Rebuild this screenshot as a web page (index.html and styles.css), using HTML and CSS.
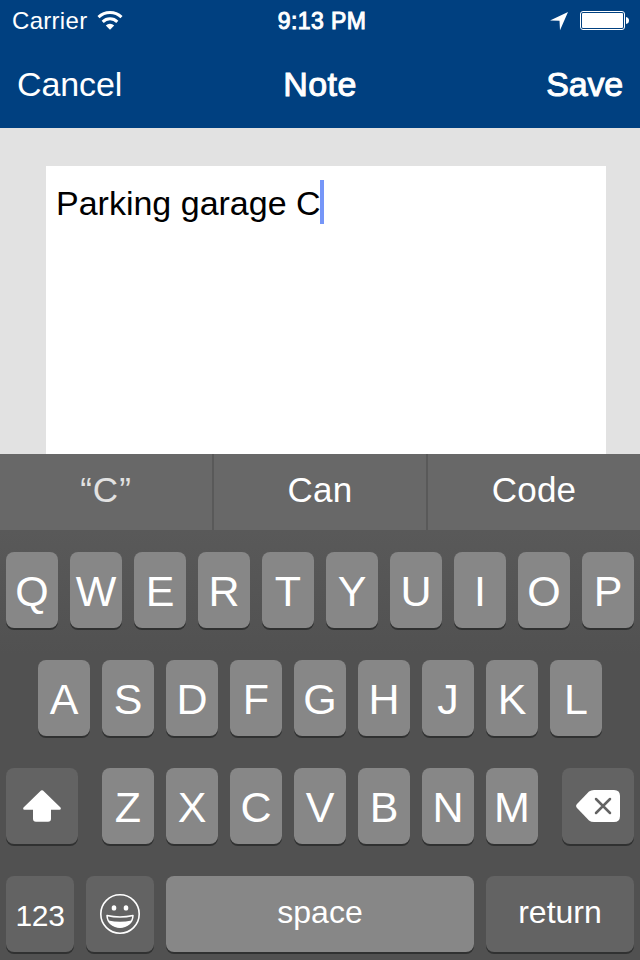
FILE: index.html
```
<!DOCTYPE html>
<html lang="en">
  <head>
    <meta charset="UTF-8" />
    <meta name="viewport" content="width=device-width, initial-scale=1.0" />
    <title>Note</title>
    <link rel="stylesheet" href="styles.css">
  </head>
  <body>
    <div class="screen">
      <header>
        <div class="status-bar">
          <div class="status-left">
            <span class="carrier">Carrier</span>
            <svg class="wifi" width="26" height="20" viewBox="0 0 26 20">
              <path d="M1.500 6.200A16.500 16.500 0 0 1 24.500 6.200M5.700 10.800A10.500 10.500 0 0 1 20.300 10.800" fill="none" stroke="#fff" stroke-width="3" />
              <path d="M8.800 14.500a6 6 0 0 1 8.400 0L13 18.800z" fill="#fff" />
            </svg>
          </div>
          <div class="time medium">9:13 PM</div>
          <div class="status-right">
            <svg class="location" width="20" height="20" viewBox="0 0 20 20">
              <path d="M1 9.500L19 1 11 19.200 10.500 9.800z" fill="#fff" />
            </svg>
            <svg class="battery" width="50" height="20" viewBox="0 0 50 20">
              <rect x=".5" y=".5" width="44" height="18" rx="2.500" fill="none" stroke="#fff" />
              <rect x="2" y="2" width="41" height="15" rx="1" fill="#fff" />
              <path d="M46 6q3 .5 3 3.500t-3 3.500z" fill="#fff" />
            </svg>
          </div>
        </div>
        <nav class="nav-bar">
          <a class="cancel">Cancel</a>
          <h1 class="medium">Note</h1>
          <a class="save medium">Save</a>
        </nav>
      </header>
      <main>
        <div class="note"><span>Parking garage C</span><i class="caret"></i></div>
      </main>
      <div class="keyboard">
        <div class="suggestions">
          <div class="typed">“C”</div>
          <div>Can</div>
          <div>Code</div>
        </div>
        <div class="rows">
          <div class="row">
            <div class="key">Q</div>
            <div class="key">W</div>
            <div class="key">E</div>
            <div class="key">R</div>
            <div class="key">T</div>
            <div class="key">Y</div>
            <div class="key">U</div>
            <div class="key">I</div>
            <div class="key">O</div>
            <div class="key">P</div>
          </div>
          <div class="row">
            <div class="key">A</div>
            <div class="key">S</div>
            <div class="key">D</div>
            <div class="key">F</div>
            <div class="key">G</div>
            <div class="key">H</div>
            <div class="key">J</div>
            <div class="key">K</div>
            <div class="key">L</div>
          </div>
          <div class="row">
            <div class="key dark shift">
              <svg width="38" height="32" viewBox="0 0 38 32">
                <path d="M18 .6q1-.9 2 0L37.500 17.500q1 2-1 2.300H28v9q0 3-3 3H13q-3 0-3-3v-9H1.500q-2-.3-1-2.300z" fill="#fff" />
              </svg>
            </div>
            <div class="key">Z</div>
            <div class="key">X</div>
            <div class="key">C</div>
            <div class="key">V</div>
            <div class="key">B</div>
            <div class="key">N</div>
            <div class="key">M</div>
            <div class="key dark delete">
              <svg width="44" height="32" viewBox="0 0 44 32">
                <path d="M13 1.500Q15 0 18 0H38q6 0 6 6V26q0 6-6 6H18q-3 0-5-1.500L1 18q-1.800-2 0-4z" fill="#fff" />
                <path d="M20 9L34 23M34 9L20 23" stroke="#636363" stroke-width="2.500" stroke-linecap="round" />
              </svg>
            </div>
          </div>
          <div class="row">
            <div class="key dark numbers">123</div>
            <div class="key dark emoji">
              <svg width="40" height="40" viewBox="0 0 40 40">
                <circle cx="20" cy="20" r="19.200" fill="none" stroke="#fff" stroke-width="1.600" />
                <ellipse cx="14" cy="13.900" rx="2.300" ry="2.700" fill="#fff" />
                <ellipse cx="26" cy="13.900" rx="2.300" ry="2.700" fill="#fff" />
                <path d="M7 21.500Q20 24.500 33 21.500C32.500 37 7.500 37 7 21.500z" fill="none" stroke="#fff" stroke-width="1.500" stroke-linejoin="round" />
                <path d="M8.500 26.500Q20 29 31.500 26.500C28.500 35.500 11.500 35.500 8.500 26.500z" fill="#fff" />
              </svg>
            </div>
            <div class="key space">space</div>
            <div class="key dark return">return</div>
          </div>
        </div>
      </div>
    </div>
  </body>
</html>
```
FILE: styles.css
```
* {
  box-sizing: border-box;
}
body {
  margin: 0;
  font-family: "Liberation Sans", Arial, sans-serif;
}
.screen {
  width: 640px;
  height: 960px;
  display: flex;
  flex-direction: column;
  overflow: hidden;
  background: #e2e2e2;
}
/* Fakes the medium weight between regular and bold */
.medium {
  font-weight: normal;
  -webkit-text-stroke: 1px #fff;
}
header {
  height: 128px;
  color: #fff;
  background: #004080;
}
.status-bar, .nav-bar {
  display: grid;
  grid-template-columns: 1fr auto 1fr;
  align-items: center;
}
.status-bar {
  height: 40px;
  padding: 1px 10px 0 12px;
  font-size: 24px;
}
.status-left, .status-right {
  display: flex;
  align-items: center;
}
.status-right {
  justify-content: flex-end;
  gap: 11px;
}
.carrier {
  letter-spacing: .3px;
}
.wifi {
  margin-left: 10px;
}
.time {
  padding: 2px 0 0 2px;
  font-size: 23px;
  letter-spacing: .4px;
}
.nav-bar {
  height: 88px;
  padding: 0 17px;
  font-size: 34px;
}
.nav-bar h1 {
  margin: 0;
  font-size: 34px;
  letter-spacing: .4px;
}
.cancel {
  letter-spacing: -.1px;
}
.save {
  text-align: right;
  letter-spacing: -.2px;
}
main {
  height: 326px;
  padding: 38px 34px 0 46px;
}
.note {
  height: 100%;
  padding: 14px 10px;
  display: flex;
  align-items: flex-start;
  font-size: 34px;
  line-height: 46px;
  color: #000;
  background: #fff;
}
.caret {
  width: 4px;
  height: 44px;
  margin-left: -1px;
  background: #7696f8;
}
.keyboard {
  flex: 1;
  color: #fff;
  background: linear-gradient(#595959 76px, #515151 200px, #515151);
}
.suggestions {
  height: 76px;
  display: grid;
  grid-template-columns: 212px 212px 212px;
  gap: 2px;
  font-size: 35px;
  line-height: 71px;
  text-align: center;
  letter-spacing: .2px;
}
.suggestions div {
  background: #686868;
}
.suggestions .typed {
  color: #e2e2e2;
  letter-spacing: 1px;
}
.rows {
  padding: 22px 6px 0;
  display: flex;
  flex-direction: column;
  gap: 32px;
}
.row {
  height: 76px;
  display: flex;
  justify-content: center;
  gap: 12px;
}
.key {
  width: 52px;
  height: 76px;
  padding-top: 2px;
  display: flex;
  align-items: center;
  justify-content: center;
  font-size: 43px;
  border-radius: 8px;
  background: #878787;
  box-shadow: 0 2px 0 #303131;
}
.dark {
  background: #636363;
}
.shift, .delete, .emoji {
  padding-top: 0;
}
.shift {
  width: 72px;
  margin-right: 12px;
}
.delete {
  width: 72px;
  margin-left: 12px;
}
.numbers, .emoji {
  width: 68px;
}
.numbers {
  padding-top: 3px;
  font-size: 30px;
  letter-spacing: -.4px;
}
.space, .return {
  padding: 0 0 3px;
  font-size: 32px;
}
.space {
  width: 308px;
}
.return {
  width: 148px;
}
```
